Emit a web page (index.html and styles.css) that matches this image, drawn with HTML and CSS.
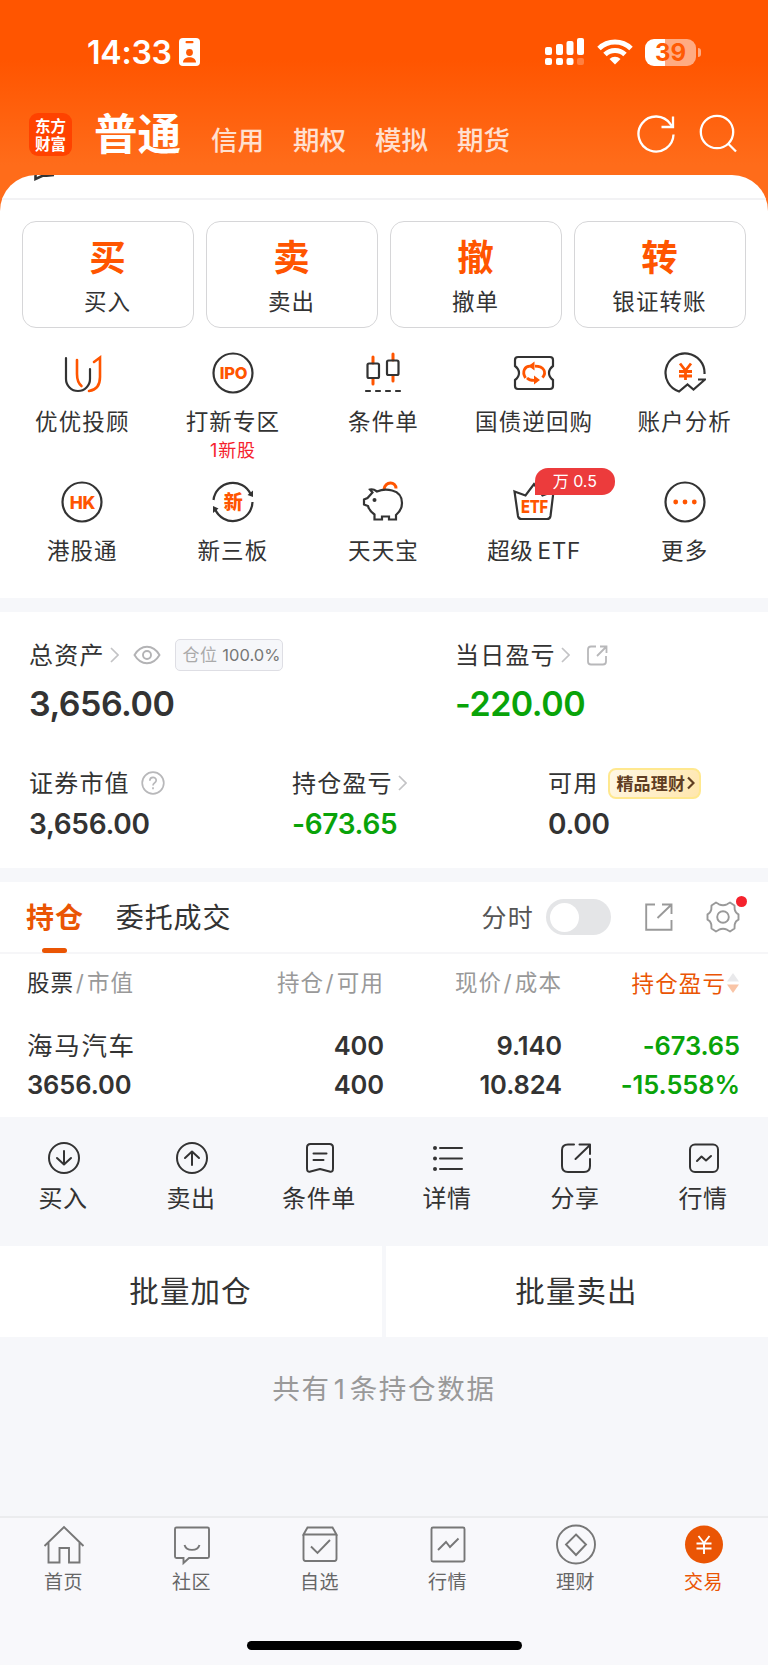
FILE: index.html
```html
<!DOCTYPE html>
<html lang="zh-CN">
<head>
    <meta charset="UTF-8">
    <meta name="viewport" content="width=device-width, initial-scale=1.0">
    <title>东方财富 - 交易</title>
    <link rel="stylesheet" href="styles.css">
</head>
<body>

    <header class="top">
        <div class="status">
            <span class="time">14:33</span>
            <svg class="id-card" width="21" height="28" viewBox="0 0 21 28">
                <rect width="21" height="28" rx="4" fill="#fff"/>
                <rect x="6.500" y="3" width="8" height="2.200" rx="1" fill="#ff5a04"/>
                <circle cx="10.500" cy="14.500" r="3.400" fill="#ff5a04"/>
                <path d="M4 24.500c0-7 13-7 13 0z" fill="#ff5a04"/>
            </svg>
            <svg class="signal" width="39" height="28" viewBox="0 0 39 28" fill="#fff">
                <rect x="0" y="9" width="7" height="8" rx="2"/>
                <rect x="11" y="6" width="7" height="11" rx="2"/>
                <rect x="21.500" y="3" width="7" height="14" rx="2"/>
                <rect x="32" y="0" width="7" height="17" rx="2"/>
                <rect x="0" y="20" width="7" height="7" rx="2"/>
                <rect x="11" y="20" width="7" height="7" rx="2"/>
                <rect x="21.500" y="20" width="7" height="7" rx="2"/>
                <rect x="32" y="20" width="7" height="7" rx="2" opacity=".25"/>
            </svg>
            <svg class="wifi" width="36" height="26" viewBox="0 0 36 26">
                <path d="M2 9.500a23 23 0 0 1 32 0M8 15.500a14.500 14.500 0 0 1 20 0" fill="none" stroke="#fff" stroke-width="5"/>
                <path d="M18 25.500l-5.500-5.500a8 8 0 0 1 11 0z" fill="#fff"/>
            </svg>
            <div class="battery"><span>39</span></div>
            <i class="battery-tip"></i>
        </div>
        <nav class="nav">
            <div class="logo"><span>东方</span><span>财富</span></div>
            <a class="nav-main">普通</a>
            <a class="nav-item">信用</a>
            <a class="nav-item">期权</a>
            <a class="nav-item">模拟</a>
            <a class="nav-item">期货</a>
            <svg class="refresh" width="40" height="40" viewBox="0 0 40 40" fill="none" stroke="#fff" stroke-width="2.300">
                <path d="M37.500 20.500A17.500 17.500 0 1 1 34.500 10.200L37 13"/>
                <path d="M37 2.500V13H25.500"/>
            </svg>
            <svg class="search" width="40" height="40" viewBox="0 0 40 40" fill="none" stroke="#fff" stroke-width="2.300">
                <circle cx="19" cy="18" r="16.200"/>
                <path d="M30 29.500l8 8"/>
            </svg>
        </nav>
    </header>

    <section class="card">
        <div class="card-edge">
            <svg width="24" height="7" viewBox="0 0 24 7"><path d="M1.500 0v4L8.500 .8h4L20 0" fill="none" stroke="#333" stroke-width="2.600"/></svg>
        </div>
        <div class="trade">
            <div class="trade-btn"><b>买</b><span>买入</span></div>
            <div class="trade-btn"><b>卖</b><span>卖出</span></div>
            <div class="trade-btn"><b>撤</b><span>撤单</span></div>
            <div class="trade-btn"><b>转</b><span>银证转账</span></div>
        </div>
        <div class="tools">
            <div class="tool">
                <svg width="42" height="42" viewBox="0 0 42 42" fill="none" stroke="#333" stroke-width="2.200" stroke-linecap="round">
                    <path d="M5 6v21a12 12 0 0 0 24 0V17"/>
                    <path d="M16 8v14c0 6 1 9 4.500 12M33 10l6-4.500V25c0 8-4 13-11 14" stroke="#ff5500" stroke-width="2.600"/>
                </svg>
                <span>优优投顾</span>
            </div>
            <div class="tool">
                <svg width="42" height="42" viewBox="0 0 42 42" fill="none" stroke="#333" stroke-width="2.200">
                    <circle cx="21" cy="21" r="19.500"/>
                    <text class="ico-text" x="21.500" y="27" font-size="16.500">IPO</text>
                </svg>
                <span>打新专区</span>
                <em>1新股</em>
            </div>
            <div class="tool">
                <svg width="42" height="42" viewBox="0 0 42 42" fill="none" stroke="#333" stroke-width="2.200" stroke-linecap="round">
                    <path d="M11 5v6M11 27v5M31 2v6M31 24v5" stroke="#ff5500" stroke-width="3"/>
                    <rect x="5.500" y="11.500" width="11.500" height="14.500" rx="1.500"/>
                    <rect x="25" y="8.500" width="11.500" height="14.500" rx="1.500"/>
                    <path d="M4 39h4M14 39h4M24 39h4M34 39h4"/>
                </svg>
                <span>条件单</span>
            </div>
            <div class="tool">
                <svg width="42" height="42" viewBox="0 0 42 42" fill="none" stroke="#333" stroke-width="2.200">
                    <path d="M5 5h32q3 0 3 3v6q-4 3-4 7t4 7v6q0 3-3 3H5q-3 0-3-3v-6q4-3 4-7t-4-7V8q0-3 3-3z"/>
                    <path d="M12.500 26.500C8.500 20 12 14.800 17 14.800h3M22 14.800c9 0 12 6 7.500 11.500M14 26.500c2 2 4 2.500 7 2.500" stroke="#ff5500" stroke-width="2.800" transform="translate(0 -.6)"/>
                    <path d="M15.500 14l6-4.500v9zM27 28l-6-4.500v9z" fill="#ff5500" stroke="none"/>
                </svg>
                <span>国债逆回购</span>
            </div>
            <div class="tool">
                <svg width="42" height="42" viewBox="0 0 42 42" fill="none" stroke="#333" stroke-width="2.200">
                    <path d="M40.500 22A19.500 19.500 0 1 0 15 39.500L23.500 32.500L29.500 37.500L41 27.500H34"/>
                    <path d="M16 11.500l5.500 7 5.500-7M15 19.500h13M15 24h13M21.500 18v10" stroke="#ff5500" stroke-width="2.800"/>
                </svg>
                <span>账户分析</span>
            </div>
            <div class="tool">
                <svg width="42" height="42" viewBox="0 0 42 42" fill="none" stroke="#333" stroke-width="2.200">
                    <circle cx="21" cy="21" r="19.500"/>
                    <text class="ico-text" x="21.500" y="27.500" font-size="17.500">HK</text>
                </svg>
                <span>港股通</span>
            </div>
            <div class="tool">
                <svg width="42" height="42" viewBox="0 0 42 42" fill="none" stroke="#333" stroke-width="2.200">
                    <path d="M1.500 19A19.500 19.500 0 0 1 38.500 13M40.500 21A19.500 19.500 0 0 1 3 28"/>
                    <path d="M41 9.500V16l-5.500-2zM1 32v-7l5.500 2.500z" fill="#333" stroke="none"/>
                    <text class="ico-text" x="21" y="28" font-size="19">新</text>
                </svg>
                <span>新三板</span>
            </div>
            <div class="tool">
                <svg width="42" height="42" viewBox="0 0 42 42" fill="none" stroke="#333" stroke-width="2.200">
                    <path d="M22 8.500c1-8.500 12-8.500 12-1" stroke="#ff5500" stroke-width="3"/>
                    <path d="M8 8.500q3-1 7 2C22 7.500 40 7 40 22q0 7-6 12v4.500h-7v-3H20v3h-7.500v-5Q7 29.500 6 25L2 23.500v-5l3.500-1.500 5-5.500z"/>
                    <circle cx="12.500" cy="19" r="2" fill="#333" stroke="none"/>
                </svg>
                <span>天天宝</span>
            </div>
            <div class="tool">
                <svg width="42" height="42" viewBox="0 0 42 42" fill="none" stroke="#333" stroke-width="2.200">
                    <path d="M1.500 10.500l11 4L21 3l8.500 11.500 11-4-3 24.500q-.5 3-3.500 3H8.500q-3 0-3.500-3z"/>
                    <text class="ico-text" x="21.500" y="31.500" font-size="18" textLength="27" lengthAdjust="spacingAndGlyphs">ETF</text>
                </svg>
                <span class="etf">超级 ETF</span>
                <i class="tool-badge">万 0.5</i>
            </div>
            <div class="tool">
                <svg width="42" height="42" viewBox="0 0 42 42" fill="none" stroke="#333" stroke-width="2.200">
                    <circle cx="21" cy="21" r="19.500"/>
                    <g fill="#ff5500" stroke="none"><circle cx="11.700" cy="21" r="2.400"/><circle cx="21" cy="21" r="2.400"/><circle cx="30.300" cy="21" r="2.400"/></g>
                </svg>
                <span>更多</span>
            </div>
        </div>
    </section>

    <section class="assets">
        <div class="total">
            <div class="cell">
                <div class="label"><span>总资产</span>
                    <svg class="arrow" width="9" height="16" viewBox="0 0 9 16"><path d="M1 1l7 7-7 7"/></svg>
                    <svg class="eye" width="28" height="20" viewBox="0 0 28 20" fill="none" stroke="#b3b3b5" stroke-width="1.900"><path d="M1.500 10C8-1 20-1 26.500 10 20 21 8 21 1.500 10z"/><circle cx="14" cy="10" r="4"/></svg>
                    <div class="ratio">仓位 <b>100.0%</b></div>
                </div>
                <div class="big">3,656.00</div>
            </div>
            <div class="cell">
                <div class="label"><span>当日盈亏</span>
                    <svg class="arrow" width="9" height="16" viewBox="0 0 9 16"><path d="M1 1l7 7-7 7"/></svg>
                    <svg class="share-sm" width="21" height="21" viewBox="0 0 21 21" fill="none" stroke="#b8b8ba" stroke-width="1.800"><path d="M9 1.500H4Q1 1.500 1 4.500v12q0 3 3 3h12q3 0 3-3V11M13 1.500h6.500V8M19 2l-9 9"/></svg>
                </div>
                <div class="big down">-220.00</div>
            </div>
        </div>
        <div class="detail">
            <div class="cell">
                <div class="label"><span>证券市值</span>
                    <svg class="help" width="24" height="24" viewBox="0 0 24 24" fill="none" stroke="#b8b8ba" stroke-width="1.700"><circle cx="12" cy="12" r="10.800"/><path d="M8.800 9.800c0-4.500 6.400-4.300 6.400-.5 0 2.500-3.200 2.700-3.200 5.200M12 16.200v2"/></svg>
                </div>
                <div class="num">3,656.00</div>
            </div>
            <div class="cell">
                <div class="label"><span>持仓盈亏</span>
                    <svg class="arrow" width="9" height="16" viewBox="0 0 9 16"><path d="M1 1l7 7-7 7"/></svg>
                </div>
                <div class="num down">-673.65</div>
            </div>
            <div class="cell">
                <div class="label"><span>可用</span>
                    <div class="promo"><span>精品理财</span><svg width="8" height="14" viewBox="0 0 8 14"><path d="M1 1.500L6.500 7 1 12.500" fill="none" stroke="#5f3d22" stroke-width="2.200"/></svg></div>
                </div>
                <div class="num">0.00</div>
            </div>
        </div>
    </section>

    <section class="holdings">
        <div class="tabs">
            <a class="tab active">持仓</a>
            <a class="tab">委托成交</a>
            <span class="switch-label">分时</span>
            <i class="switch"></i>
            <svg class="share" width="28" height="28" viewBox="0 0 28 28" fill="none" stroke="#999" stroke-width="1.900"><path d="M10 1.500H1.200v25.300h25.300V17M17 1.500h9.500V11M26 2L12.500 15"/></svg>
            <span class="gear">
                <svg width="34" height="34" viewBox="0 0 34 34" fill="none" stroke="#999" stroke-width="1.900" stroke-linejoin="round"><path d="M10 2.500l3 1.800q4 1.800 8 0l3-1.800 4.500 3 .2 4q.8 3.500 3.800 4.800v5.400q-3 1.300-3.800 4.800l-.2 4-4.500 3-3-1.800q-4-1.800-8 0l-3 1.800-4.500-3-.2-4q-.8-3.500-3.800-4.800v-5.400q3-1.300 3.800-4.800l.2-4z"/><circle cx="17" cy="17" r="5.800"/></svg>
            </span>
        </div>
        <div class="row head">
            <span><b>股票</b><i>/</i>市值</span>
            <span>持仓<i>/</i>可用</span>
            <span>现价<i>/</i>成本</span>
            <span class="sorted">持仓盈亏<svg width="14" height="20" viewBox="0 0 14 20"><path d="M7 0l6 8.500H1z" fill="#e9e9eb"/><path d="M7 20l6-8.500H1z" fill="#f9c4a6"/></svg></span>
        </div>
        <div class="row first">
            <span class="name">海马汽车</span>
            <span>400</span>
            <span>9.140</span>
            <span class="down">-673.65</span>
        </div>
        <div class="row second">
            <span>3656.00</span>
            <span>400</span>
            <span>10.824</span>
            <span class="down">-15.558%</span>
        </div>
    </section>

    <div class="actions">
        <div class="action">
            <svg width="34" height="34" viewBox="0 0 34 34"><circle cx="17" cy="17" r="15"/><path d="M17 10v13M10 17l7 6.500 7-6.500"/></svg>
            <span>买入</span>
        </div>
        <div class="action">
            <svg width="34" height="34" viewBox="0 0 34 34"><circle cx="17" cy="17" r="15"/><path d="M17 24V11M10 17l7-6.500 7 6.500"/></svg>
            <span>卖出</span>
        </div>
        <div class="action">
            <svg width="34" height="34" viewBox="0 0 34 34"><path d="M7.500 3h19q3.500 0 3.500 3.500v21q0 4-3.500 3L17 28l-9.500 2.500q-3.500 1-3.500-3v-21Q4 3 7.500 3zM10.500 12.500h13M10.500 19h10"/></svg>
            <span>条件单</span>
        </div>
        <div class="action">
            <svg width="34" height="34" viewBox="0 0 34 34"><path d="M9 7h22M9 17.500h22M9 28h22"/><g fill="#333" stroke="none"><circle cx="4" cy="7" r="2"/><circle cx="4" cy="17.500" r="2"/><circle cx="4" cy="28" r="2"/></g></svg>
            <span>详情</span>
        </div>
        <div class="action">
            <svg width="34" height="34" viewBox="0 0 34 34"><path d="M15 3.500H9Q3 3.500 3 9v16q0 6 6 6h16q6 0 6-6v-7M20.500 3.500H31V13M31 4L16.500 18"/></svg>
            <span>分享</span>
        </div>
        <div class="action">
            <svg width="34" height="34" viewBox="0 0 34 34"><rect x="3" y="3.500" width="28" height="27.500" rx="5"/><path d="M10 20l4.500-4.500 4.500 4 5-4.500"/></svg>
            <span>行情</span>
        </div>
    </div>

    <div class="batch">
        <div>批量加仓</div>
        <div>批量卖出</div>
    </div>

    <p class="count">共有<i>1</i>条持仓数据</p>

    <footer class="tabbar">
        <div class="tabbar-items">
            <a>
                <svg width="42" height="42" viewBox="0 0 42 42"><path d="M1.500 22L21 3l19.500 19M5.500 18.500v20h11V24h9.500v14.500h10.500v-20"/></svg>
                <span>首页</span>
            </a>
            <a>
                <svg width="42" height="42" viewBox="0 0 42 42"><path d="M4 5q0-1.500 1.500-1.500h31q1.500 0 1.500 1.500v27.500q0 1.500-1.500 1.500H18l-5.500 5V34h-7Q4 34 4 32.500zM13.500 21c2 6.500 13 6.500 15 0"/></svg>
                <span>社区</span>
            </a>
            <a>
                <svg width="42" height="42" viewBox="0 0 42 42"><path d="M4.500 10.500l4-7h25l4 7zM4.500 10.500v24q0 2.500 2 2.500h29q2 0 2-2.500v-24M12 22.500l6.500 6.500L31 16"/></svg>
                <span>自选</span>
            </a>
            <a>
                <svg width="42" height="42" viewBox="0 0 42 42"><rect x="4.500" y="3.500" width="33" height="34" rx="1.500"/><path d="M11 26l8-8 4 5 8.500-8.500"/></svg>
                <span>行情</span>
            </a>
            <a>
                <svg width="42" height="42" viewBox="0 0 42 42"><circle cx="21" cy="20.500" r="19"/><path d="M21 10.500l10 10-10 10.500-10-10.500z"/></svg>
                <span>理财</span>
            </a>
            <a class="on">
                <svg width="42" height="42" viewBox="0 0 42 42"><circle cx="21" cy="20.500" r="19" fill="#ea5504" stroke="none"/><path d="M15.500 12l5.500 7 5.500-7M13.500 19.500h15M13.500 24.500h15M21 19v11" stroke="#fff"/></svg>
                <span>交易</span>
            </a>
        </div>
        <div class="home-bar"></div>
    </footer>

</body>
</html>
```
FILE: styles.css
```css
* {
    box-sizing: border-box;
}
body {
    margin: 0;
    width: 768px;
    height: 1665px;
    overflow: hidden;
    background: #f6f7fa;
    color: #333;
    font-family: Inter, "Noto Sans CJK SC", sans-serif;
}
svg {
    display: block;
    flex: none;
}
i, em {
    font-style: normal;
}
.down {
    color: #09a309;
}

/* header */
.top {
    height: 215px;
    background: linear-gradient(#ff5500 60px, #ff6c1a 165px);
    color: #fff;
}
.status {
    display: flex;
    height: 104px;
    padding: 0 67px 0 87px;
    align-items: center;
}
.time {
    width: 92px;
    font-size: 32px;
    font-weight: 600;
    letter-spacing: -.2px;
}
.signal {
    margin-left: auto;
}
.wifi {
    margin: 0 12px 0 13px;
}
.battery {
    width: 51px;
    height: 27px;
    border-radius: 9px;
    background: linear-gradient(90deg, #fff 20px, #ffab82 20px);
    color: #ff5a04;
    font-size: 24px;
    font-weight: 700;
    line-height: 27px;
    text-align: center;
}
.battery-tip {
    width: 3px;
    height: 9px;
    margin-left: 2px;
    border-radius: 0 4px 4px 0;
    background: #ffab82;
}
.nav {
    display: flex;
    height: 60px;
    padding-left: 29px;
    align-items: center;
}
.logo {
    display: flex;
    flex-direction: column;
    width: 43px;
    height: 43px;
    padding-top: 3px;
    border-radius: 9px;
    background: #ff4200;
    font-family: "Noto Sans CJK SC", sans-serif;
    font-size: 15.5px;
    font-weight: 700;
    line-height: 18px;
    text-align: center;
}
.nav-main {
    margin: 0 30px 0 22px;
    font-size: 43.5px;
    font-weight: 700;
    line-height: 58px;
}
.nav-item {
    width: 82px;
    padding-top: 9px;
    font-size: 26.5px;
    font-weight: 500;
    opacity: .8;
}
.refresh {
    margin-left: 97px;
}
.search {
    margin-left: 22px;
}

/* white card */
.card {
    height: 423px;
    margin-top: -40px;
    border-radius: 36px 36px 0 0;
    background: #fff;
    overflow: hidden;
}
.card-edge {
    height: 25px;
    padding-left: 34px;
    border-bottom: 2px solid #f2f2f4;
}
.trade {
    display: grid;
    grid-template-columns: repeat(4, 1fr);
    gap: 12px;
    padding: 21px 22px 0;
}
.trade-btn {
    display: flex;
    flex-direction: column;
    height: 107px;
    align-items: center;
    border: 1px solid #d6d6d8;
    border-radius: 14px;
}
.trade-btn b {
    height: 54px;
    padding-top: 9px;
    margin-right: 1px;
    color: #ff5500;
    font-size: 36.5px;
    line-height: 54px;
}
.trade-btn span {
    padding-top: 8px;
    margin-right: 1px;
    font-size: 22.5px;
    letter-spacing: 1.1px;
    line-height: 36px;
}
.tools {
    display: grid;
    grid-template-columns: repeat(5, 1fr);
    grid-auto-rows: 128.5px;
    padding: 24px 8px 0 7px;
}
.tool {
    position: relative;
    display: flex;
    flex-direction: column;
    align-items: center;
    white-space: nowrap;
}
.tool span {
    margin-top: 10px;
    font-size: 22.5px;
    letter-spacing: 1.1px;
    line-height: 36px;
}
.tool .etf {
    letter-spacing: .7px;
    word-spacing: -3px;
}
.tool em {
    color: #f5222d;
    font-size: 18px;
    letter-spacing: .8px;
    line-height: 22px;
}
.tool-badge {
    position: absolute;
    top: -13px;
    left: 76px;
    width: 80px;
    height: 27px;
    border-radius: 13px 13px 13px 0;
    background: #ec3b3c;
    color: #fff;
    font-size: 16px;
    line-height: 26px;
    text-align: center;
}
.ico-text {
    fill: #ff5500;
    stroke: none;
    font-weight: 800;
    text-anchor: middle;
    letter-spacing: -.3px;
}

/* assets */
.assets {
    height: 256px;
    margin-top: 14px;
    padding: 25px 30px 0 29px;
    background: #fff;
}
.total {
    display: grid;
    grid-template-columns: 426px 1fr;
}
.detail {
    display: grid;
    grid-template-columns: 263px 256px 1fr;
    padding-top: 38px;
}
.label {
    display: flex;
    height: 36px;
    align-items: center;
    font-size: 24px;
    letter-spacing: 1.2px;
    white-space: nowrap;
}
.label > span {
    margin-top: -3px;
}
.arrow {
    margin-left: 5px;
    fill: none;
    stroke: #c3c3c5;
    stroke-width: 1.7;
}
.eye {
    margin-left: 14px;
}
.ratio {
    width: 108px;
    height: 32px;
    margin-left: 14px;
    padding-left: 7px;
    border: 1px solid #dedee4;
    border-radius: 5px;
    background: #f6f7fa;
    color: #aaa;
    font-size: 17px;
    letter-spacing: .3px;
    line-height: 31px;
}
.ratio b {
    color: #777;
    font-size: 16.5px;
    font-weight: 400;
    letter-spacing: 0;
}
.share-sm {
    margin-left: 17px;
}
.help {
    margin-left: 11px;
}
.big {
    height: 54px;
    padding-top: 4px;
    font-size: 34px;
    font-weight: 600;
    letter-spacing: -.5px;
    line-height: 54px;
}
.num {
    height: 44px;
    padding-top: 1px;
    font-size: 28px;
    font-weight: 600;
    letter-spacing: -.3px;
    line-height: 44px;
}
.promo {
    display: flex;
    width: 93px;
    height: 31px;
    margin-left: 10px;
    padding-left: 6px;
    align-items: center;
    gap: 2px;
    border: 2px solid #ffe88f;
    border-radius: 8px;
    background: linear-gradient(120deg, #fff8e6, #ffe6ad);
    color: #5f3d22;
    font-size: 17px;
    font-weight: 700;
    letter-spacing: .2px;
}
.promo span {
    margin-top: -2px;
}

/* holdings */
.holdings {
    height: 235px;
    margin-top: 14px;
    background: #fff;
}
.tabs {
    display: flex;
    height: 72px;
    padding: 0 28px 0 26px;
    align-items: center;
    border-bottom: 2px solid #f6f6f8;
}
.tab {
    height: 72px;
    margin-right: 32px;
    padding-top: 2px;
    font-size: 28px;
    letter-spacing: .9px;
    line-height: 70px;
}
.tab.active {
    color: #ea5504;
    font-weight: 700;
}
.tab.active::after {
    content: "";
    display: block;
    width: 25px;
    height: 5px;
    margin: -5px auto 0;
    border-radius: 3px;
    background: #ea5504;
}
.switch-label {
    margin: -2px 0 0 auto;
    color: #555;
    font-size: 25px;
    letter-spacing: 1.2px;
}
.switch {
    width: 65px;
    height: 36px;
    margin-left: 12px;
    padding: 3.5px;
    border-radius: 18px;
    background: #e4e5e7;
}
.switch::before {
    content: "";
    display: block;
    width: 29px;
    height: 29px;
    border-radius: 50%;
    background: #fff;
}
.share {
    margin-left: 34px;
}
.gear {
    position: relative;
    margin-left: 33px;
}
.gear::after {
    content: "";
    position: absolute;
    top: -4px;
    right: -7px;
    width: 11px;
    height: 11px;
    border-radius: 50%;
    background: #f5222d;
}
.row {
    display: grid;
    grid-template-columns: 200px 157px 178px 178px;
    padding-left: 27px;
    font-size: 25.5px;
    font-weight: 600;
    letter-spacing: -.1px;
    line-height: 38px;
    text-align: right;
    white-space: nowrap;
}
.row > :first-child {
    text-align: left;
}
.head {
    height: 58px;
    color: #999;
    font-size: 22.5px;
    font-weight: 400;
    letter-spacing: 1.1px;
    line-height: 57px;
}
.head b {
    color: #333;
    font-weight: 400;
}
.head i {
    padding: 0 2px 0 1.5px;
}
.sorted {
    display: flex;
    align-items: center;
    justify-content: flex-end;
    color: #ea5504;
}
.first {
    padding-top: 15px;
    height: 54px;
}
.name {
    font-weight: 400;
    letter-spacing: 1.7px;
}

/* row actions */
.actions {
    display: grid;
    grid-template-columns: repeat(6, 1fr);
    height: 129px;
    padding-top: 24px;
}
.action {
    display: flex;
    flex-direction: column;
    align-items: center;
    font-size: 24px;
    letter-spacing: .6px;
    line-height: 36px;
}
.action span {
    margin-top: 6px;
    margin-right: 2px;
}
.action svg {
    fill: none;
    stroke: #333;
    stroke-width: 2;
    stroke-linecap: round;
    stroke-linejoin: round;
}
.batch {
    display: grid;
    grid-template-columns: 382px 1fr;
    gap: 4px;
    height: 90px;
}
.batch div {
    padding-right: 1px;
    background: #fff;
    font-size: 29.5px;
    letter-spacing: 1.1px;
    line-height: 91px;
    text-align: center;
}
.count {
    height: 180px;
    margin: 0;
    color: #999;
    font-size: 27.5px;
    letter-spacing: 1.7px;
    line-height: 107px;
    text-align: center;
}
.count i {
    padding: 0 3px;
}

/* bottom bar */
.tabbar {
    height: 149px;
    border-top: 2px solid #ebecee;
    background: #f8f8fb;
}
.tabbar-items {
    display: grid;
    grid-template-columns: repeat(6, 1fr);
    height: 123px;
    padding-top: 6px;
}
.tabbar-items a {
    display: flex;
    flex-direction: column;
    align-items: center;
    color: #666;
    font-size: 19px;
    letter-spacing: .6px;
    line-height: 28px;
}
.tabbar-items span {
    margin-top: 3px;
    margin-right: 1px;
}
.tabbar-items svg {
    fill: none;
    stroke: #777;
    stroke-width: 1.9;
}
.tabbar-items .on {
    color: #ea5504;
}
.home-bar {
    width: 275px;
    height: 9px;
    margin: 0 auto;
    border-radius: 5px;
    background: #000;
}
```
